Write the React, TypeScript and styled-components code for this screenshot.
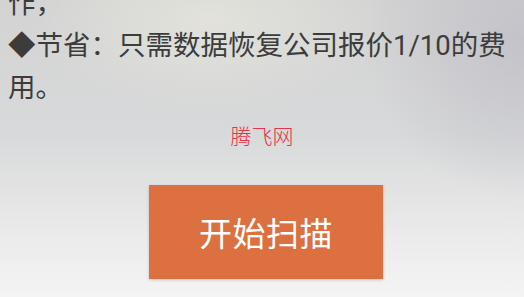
import React from "react";
import styled, { createGlobalStyle } from "styled-components";

const GlobalStyle = createGlobalStyle`
  html, body {
    margin: 0;
    padding: 0;
  }
  body {
    font-family: "Roboto", "Noto Sans CJK SC", sans-serif;
  }
`;

const App = () => {
  return (
    <Page>
      <GlobalStyle />
      <Intro>
        作，
        <br />
        ◆节省：只需数据恢复公司报价1/10的费用。
      </Intro>
      <Brand>腾飞网</Brand>
      <ButtonRow>
        <ScanButton type="button">开始扫描</ScanButton>
      </ButtonRow>
    </Page>
  );
};

const Page = styled.div`
  width: 524px;
  height: 297px;
  overflow: hidden;
  background:
    radial-gradient(ellipse 180px 90px at 210px 20px, rgba(228, 228, 220, 0.9), rgba(228, 228, 220, 0)),
    radial-gradient(ellipse 160px 160px at 524px 40px, rgba(190, 190, 198, 0.8), rgba(190, 190, 198, 0)),
    linear-gradient(180deg, #d3d3d3 0%, #d8d9da 45%, #ebebeb 80%, #f4f4f4 100%);
`;

const Intro = styled.p`
  margin: -17px 0 0;
  padding: 0 12px 0 8px;
  font-size: 27.5px;
  line-height: 42px;
  color: #3c3c3c;
`;

const Brand = styled.div`
  margin-top: 14px;
  text-align: center;
  font-family: "Noto Sans CJK SC", sans-serif;
  font-size: 21px;
  line-height: 24px;
  font-weight: 300;
  color: #e3334b;
`;

const ButtonRow = styled.div`
  display: flex;
  justify-content: center;
  padding-left: 8px;
  margin-top: 38px;
`;

const ScanButton = styled.button`
  width: 234px;
  height: 94px;
  border: none;
  border-radius: 0;
  background: #dd7040;
  box-shadow: 0 1px 3px rgba(0, 0, 0, 0.18);
  color: #ffffff;
  font-family: "Noto Sans CJK SC", sans-serif;
  font-size: 33px;
  letter-spacing: 0.5px;
  padding: 0;
  cursor: pointer;
`;

export default App;
